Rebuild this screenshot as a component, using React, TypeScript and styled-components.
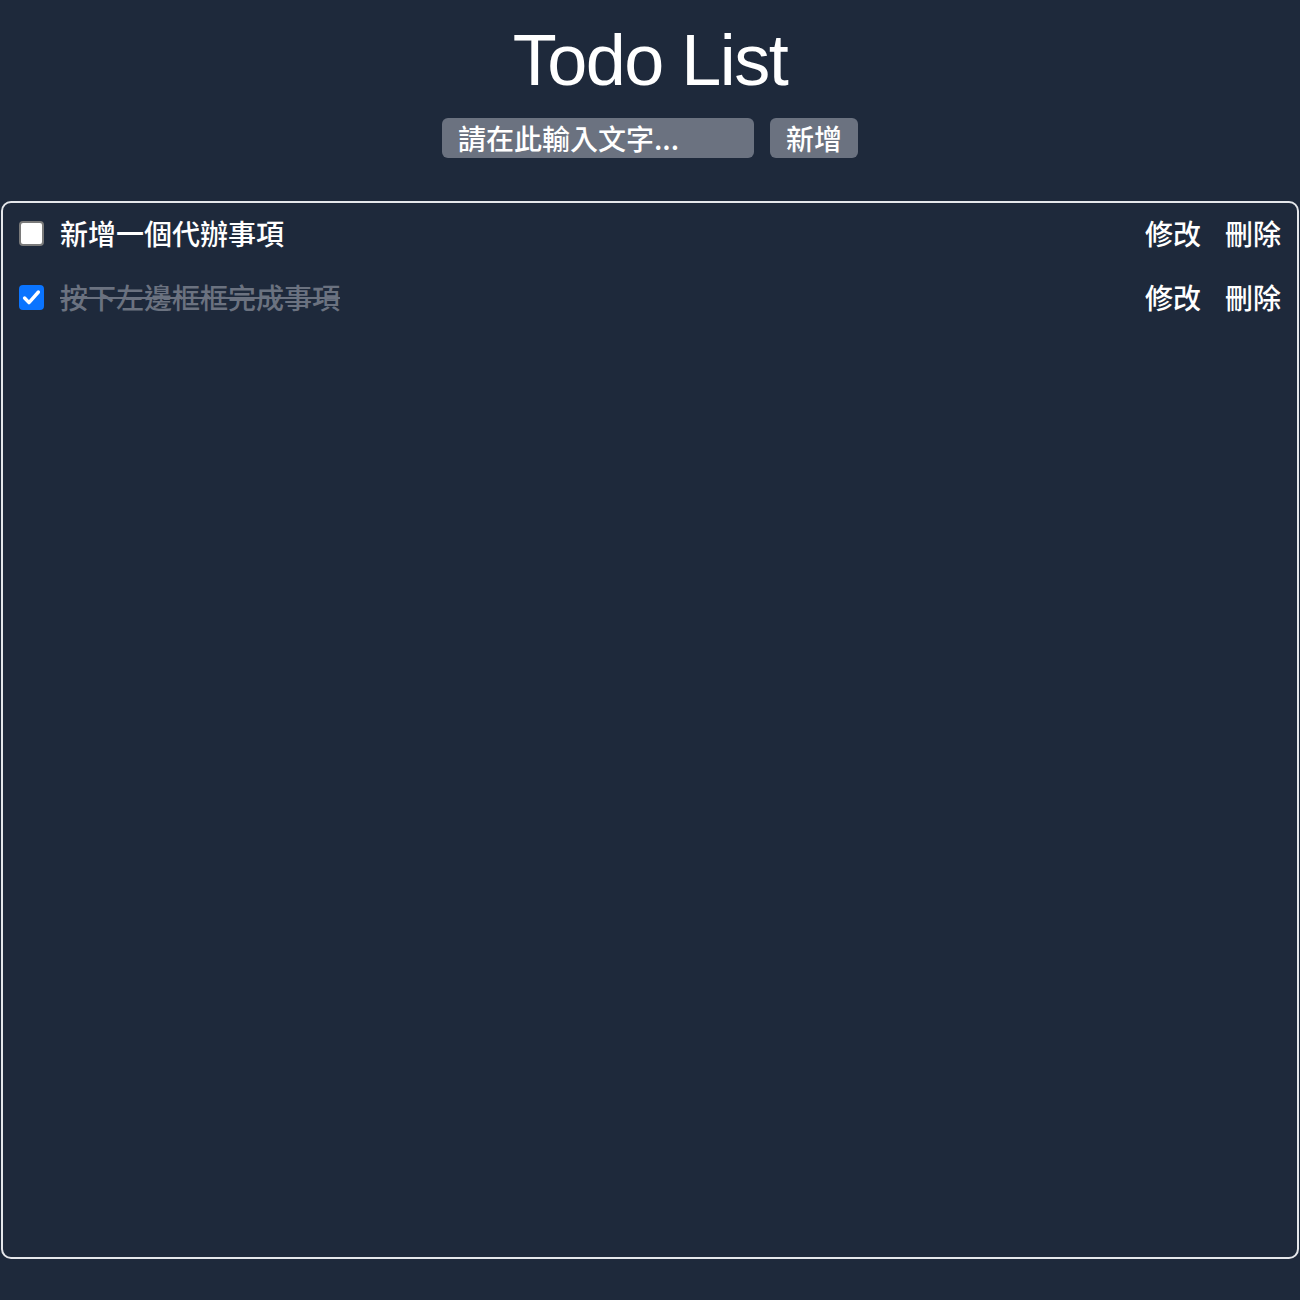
import React, { useState } from 'react';
import styled, { createGlobalStyle } from 'styled-components';

type Todo = {
  id: number;
  text: string;
  done: boolean;
};

const checkMark =
  "url(\"data:image/svg+xml,%3csvg xmlns='http://www.w3.org/2000/svg' viewBox='0 0 21 21'%3e%3cpath fill='none' stroke='white' stroke-width='3.4' stroke-linecap='round' stroke-linejoin='round' d='M3.6 11l4.4 4.6 9.4-10.6'/%3e%3c/svg%3e\")";

const GlobalStyle = createGlobalStyle`
  html, body {
    margin: 0;
    padding: 0;
    background-color: #1e293b;
  }
  body {
    font-family: "Liberation Sans", "Noto Sans CJK TC", sans-serif;
    color: #fff;
  }
`;

const Page = styled.div`
  min-height: 1300px;
  display: flex;
  flex-direction: column;
  align-items: center;
`;

const Title = styled.h1`
  margin: 24px 0 22px;
  font-family: "Liberation Sans", Arial, sans-serif;
  font-weight: 400;
  font-size: 72px;
  line-height: 72px;
  letter-spacing: -1.5px;
  color: #fff;
`;

const Form = styled.form`
  display: flex;
  gap: 16px;
  margin-bottom: 43px;
`;

const Input = styled.input`
  box-sizing: border-box;
  width: 312px;
  height: 40px;
  padding: 0 16px;
  border: none;
  border-radius: 6px;
  background-color: #6b7280;
  color: #fff;
  font-family: "Noto Sans CJK TC", sans-serif;
  font-weight: 500;
  font-size: 28px;
  outline: none;

  &::placeholder {
    color: #fff;
    opacity: 1;
  }
`;

const AddButton = styled.button`
  box-sizing: border-box;
  height: 40px;
  padding: 0 16px;
  border: none;
  border-radius: 6px;
  background-color: #6b7280;
  color: #fff;
  font-family: "Noto Sans CJK TC", sans-serif;
  font-weight: 500;
  font-size: 28px;
  line-height: 40px;
  cursor: pointer;
`;

const ListBox = styled.ul`
  box-sizing: border-box;
  align-self: stretch;
  height: 1058px;
  margin: 0 1px;
  padding: 10px 16px;
  list-style: none;
  border: 2px solid #e5e7eb;
  border-radius: 10px;
  display: flex;
  flex-direction: column;
  gap: 24px;
`;

const Row = styled.li`
  display: flex;
  align-items: center;
  height: 40px;
  gap: 16px;
`;

const Check = styled.input`
  appearance: none;
  box-sizing: border-box;
  width: 25px;
  height: 25px;
  margin: 0;
  flex-shrink: 0;
  border: 2px solid #7a7a7a;
  border-radius: 4px;
  background-color: #fff;
  cursor: pointer;

  &:checked {
    border-color: #0a74ff;
    background-color: #0a74ff;
    background-image: ${checkMark};
    background-size: 100% 100%;
    background-repeat: no-repeat;
  }
`;

const Label = styled.span<{ $done: boolean }>`
  flex: 1;
  font-family: "Noto Sans CJK TC", sans-serif;
  font-weight: 500;
  font-size: 28px;
  line-height: 40px;
  color: ${(p) => (p.$done ? '#6b7280' : '#fff')};
  text-decoration: ${(p) => (p.$done ? 'line-through' : 'none')};
`;

const Actions = styled.div`
  display: flex;
  gap: 24px;
`;

const TextButton = styled.button`
  padding: 0;
  border: none;
  background: none;
  color: #fff;
  font-family: "Noto Sans CJK TC", sans-serif;
  font-weight: 500;
  font-size: 28px;
  line-height: 40px;
  cursor: pointer;
`;

const App: React.FC = () => {
  const [value, setValue] = useState('');
  const [todos, setTodos] = useState<Todo[]>([
    { id: 1, text: '新增一個代辦事項', done: false },
    { id: 2, text: '按下左邊框框完成事項', done: true },
  ]);

  const toggle = (id: number) =>
    setTodos((list) => list.map((t) => (t.id === id ? { ...t, done: !t.done } : t)));

  const remove = (id: number) => setTodos((list) => list.filter((t) => t.id !== id));

  const add = (e: React.FormEvent) => {
    e.preventDefault();
    if (!value.trim()) return;
    setTodos((list) => [...list, { id: Date.now(), text: value, done: false }]);
    setValue('');
  };

  return (
    <Page>
      <GlobalStyle />
      <Title>Todo List</Title>
      <Form onSubmit={add}>
        <Input
          placeholder="請在此輸入文字..."
          value={value}
          onChange={(e) => setValue(e.target.value)}
        />
        <AddButton type="submit">新增</AddButton>
      </Form>
      <ListBox>
        {todos.map((todo) => (
          <Row key={todo.id}>
            <Check type="checkbox" checked={todo.done} onChange={() => toggle(todo.id)} />
            <Label $done={todo.done}>{todo.text}</Label>
            <Actions>
              <TextButton type="button">修改</TextButton>
              <TextButton type="button" onClick={() => remove(todo.id)}>
                刪除
              </TextButton>
            </Actions>
          </Row>
        ))}
      </ListBox>
    </Page>
  );
};

export default App;
